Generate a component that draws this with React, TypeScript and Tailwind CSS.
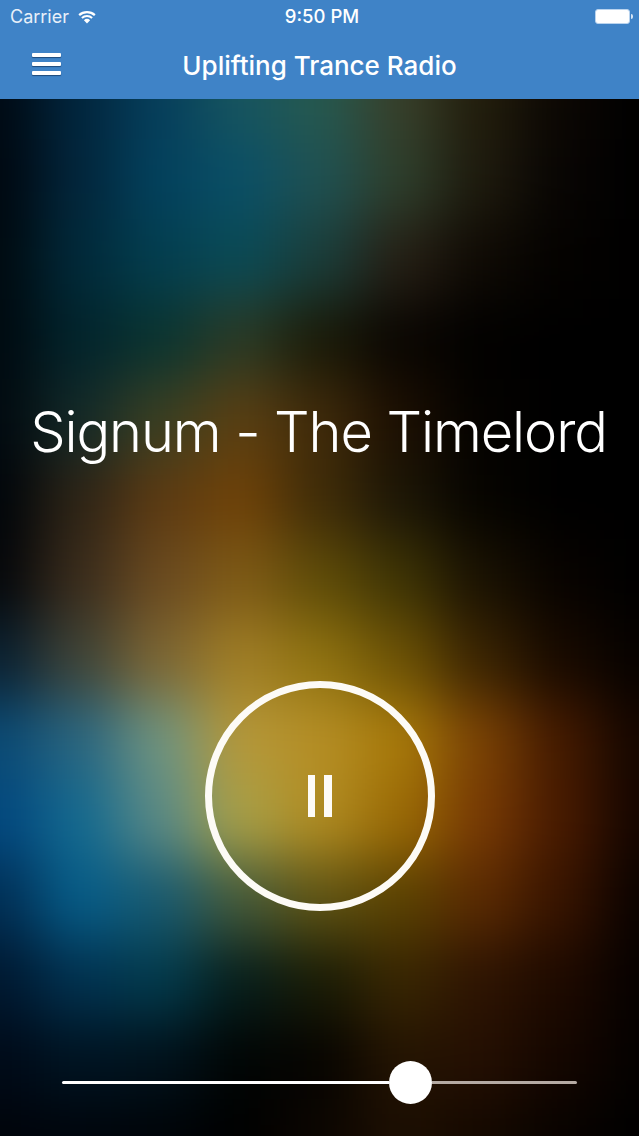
// Blurred artwork colours, sampled every 80px across (9 columns) and down (14 rows)
const ART = [
  ["#000a14", "#01263e", "#063f5c", "#17555f", "#26594f", "#383f2a", "#221d0c", "#0c0703", "#000000"],
  ["#000810", "#02263c", "#03415d", "#0a4f66", "#1f5152", "#2e3f2c", "#1e1a0d", "#080503", "#000000"],
  ["#000a10", "#012a3a", "#033e4f", "#0a4a55", "#1a3d3a", "#261f14", "#0f0a04", "#040200", "#000000"],
  ["#000a10", "#02242c", "#0a3430", "#2a3a25", "#1a1a08", "#0a0602", "#020100", "#000000", "#000000"],
  ["#010a10", "#142a28", "#3a3f22", "#5a3f12", "#3f2a0a", "#1c0f02", "#040200", "#000000", "#000000"],
  ["#00050a", "#2e2416", "#5c3a12", "#6f4208", "#3f2c08", "#1c1606", "#060400", "#000000", "#000000"],
  ["#05070a", "#3a2c1c", "#6a4a20", "#7e5a16", "#5f4c08", "#3e3405", "#1a1202", "#080300", "#000000"],
  ["#0a2030", "#3f4438", "#7c6634", "#a07e26", "#8f7210", "#6c5205", "#3a2402", "#180a00", "#060200"],
  ["#0b4a74", "#2a6680", "#6f9480", "#b5983a", "#b58e25", "#a87a0a", "#7a4204", "#441a00", "#140600"],
  ["#02487f", "#146a90", "#5a8a86", "#a8a048", "#b08c22", "#9a6a05", "#783a04", "#481a00", "#140500"],
  ["#012f55", "#065c88", "#185a70", "#455a3a", "#5f5414", "#5a4202", "#5a2a02", "#381400", "#0a0200"],
  ["#001830", "#013250", "#023a4c", "#071f1c", "#1a1c06", "#382602", "#2e1402", "#1e0a00", "#060100"],
  ["#000a18", "#001422", "#01121c", "#010504", "#060401", "#241402", "#240f02", "#140600", "#040100"],
  ["#00040a", "#00050c", "#000408", "#000000", "#0c0601", "#1c0e02", "#140800", "#080300", "#000000"],
];

function Artwork() {
  return (
    <svg className="absolute inset-0 h-full w-full" viewBox="0 0 639 1037" preserveAspectRatio="none">
      <defs>
        <filter
          id="art-blur"
          filterUnits="userSpaceOnUse"
          x="-300"
          y="-300"
          width="1239"
          height="1637"
          colorInterpolationFilters="sRGB"
        >
          <feGaussianBlur stdDeviation="28" />
        </filter>
      </defs>
      <g filter="url(#art-blur)">
        {ART.map((row, r) =>
          row.map((fill, c) => {
            // outer cells run past the frame so the blur does not fade at the edges
            const x = c === 0 ? -300 : c * 80 - 40;
            const y = r === 0 ? -300 : r * 80 - 40;
            const right = c === row.length - 1 ? 939 : c * 80 + 40;
            const bottom = r === ART.length - 1 ? 1337 : r * 80 + 40;
            return <rect key={`${r}-${c}`} x={x} y={y} width={right - x} height={bottom - y} fill={fill} />;
          })
        )}
      </g>
    </svg>
  );
}

function Wifi() {
  return (
    <svg width="20" height="14" viewBox="0 0 20 14" fill="white">
      <path d="M10 13.6 6.9 10.2a4.6 4.6 0 0 1 6.2 0L10 13.6Z" />
      <path d="M5.6 8.8 4.2 7.3a8.7 8.7 0 0 1 11.6 0l-1.4 1.5a6.6 6.6 0 0 0-8.8 0Z" />
      <path d="M2.9 5.9 1.4 4.3a12.8 12.8 0 0 1 17.2 0l-1.5 1.6a10.7 10.7 0 0 0-14.2 0Z" />
    </svg>
  );
}

function Battery() {
  return (
    <div className="flex items-center">
      <div className="h-[15px] w-[35px] rounded-[3px] border border-[#b9d3ee] bg-white" />
      <div className="ml-[1px] h-[5px] w-[2px] rounded-r-sm bg-[#d5e4f4]" />
    </div>
  );
}

export default function App() {
  return (
    <div className="flex h-[1136px] w-[639px] flex-col overflow-hidden bg-black font-['Inter',sans-serif] text-white">
      {/* status bar + nav */}
      <header className="h-[99px] shrink-0 bg-[#3f83c7]">
        <div className="flex h-[33px] items-center justify-between pl-[10px] pr-[5px]">
          <div className="flex w-[200px] items-center gap-[8px] text-[18px] text-[#e8f0f9]">
            <span>Carrier</span>
            <Wifi />
          </div>
          <span className="text-[18.5px] font-medium">9:50 PM</span>
          <div className="flex w-[200px] justify-end pr-[1px]">
            <Battery />
          </div>
        </div>
        <div className="flex h-[66px] items-center pb-[2px]">
          <div className="flex w-[93px] flex-col gap-[5px] pl-[32px] pb-[2px]">
            <span className="h-[4px] w-[29px] rounded-[1px] bg-white shadow-[0_1px_1px_#1d4a7a]" />
            <span className="h-[4px] w-[29px] rounded-[1px] bg-white shadow-[0_1px_1px_#1d4a7a]" />
            <span className="h-[4px] w-[29px] rounded-[1px] bg-white shadow-[0_1px_1px_#1d4a7a]" />
          </div>
          <h1 className="flex-1 pr-[93px] text-center text-[26px] font-medium whitespace-nowrap">
            Uplifting Trance Radio
          </h1>
        </div>
      </header>

      <main className="relative flex flex-1 flex-col items-center">
        <Artwork />
        <p className="relative mt-[298px] mr-[2px] text-center text-[56px] leading-[70px] font-light tracking-[-1.1px] whitespace-nowrap">
          Signum - The Timelord
        </p>
        <button className="relative mt-[214px] flex h-[230px] w-[230px] items-center justify-center gap-[9px] rounded-full border-[7px] border-[#fdfbf6]">
          <span className="h-[42px] w-[7px] bg-[#fdfbf6]" />
          <span className="h-[42px] w-[8px] bg-[#fdfbf6]" />
        </button>
        {/* volume slider */}
        <div className="relative mt-[150px] flex w-[515px] items-center">
          <div className="h-[3px] flex-1 rounded-l-full bg-white" />
          <div className="h-[43px] w-[43px] shrink-0 rounded-full bg-white" />
          <div className="h-[3px] w-[145px] rounded-r-full bg-[#b5aaa3]" />
        </div>
      </main>
    </div>
  );
}
